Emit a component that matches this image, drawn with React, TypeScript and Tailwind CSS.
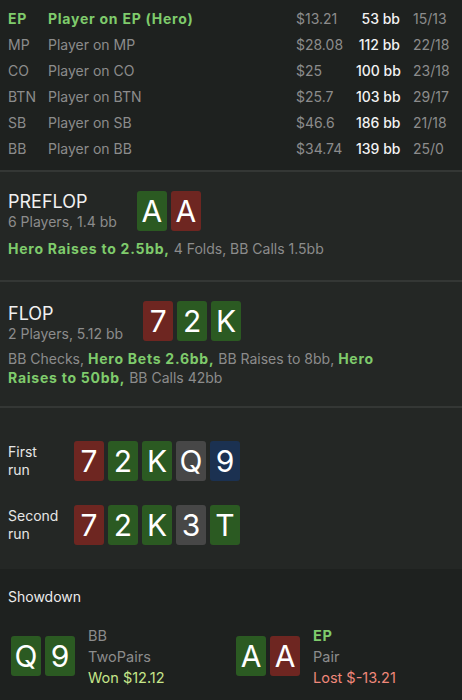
import React from "react";

type C = "g" | "r" | "k" | "b";
const cardBg: Record<C, string> = {
  g: "bg-[#2b5a22]",
  r: "bg-[#6e2621]",
  k: "bg-[#474747]",
  b: "bg-[#1b3151]",
};

function Card({ v, c }: { v: string; c: C }) {
  return (
    <div
      className={`w-[30px] h-[40px] rounded-[3px] flex items-center justify-center text-[30px] leading-none text-white ${cardBg[c]}`}
    >
      {v}
    </div>
  );
}

function Cards({ cards }: { cards: [string, C][] }) {
  return (
    <div className="flex gap-[4px]">
      {cards.map(([v, c], i) => (
        <Card key={i} v={v} c={c} />
      ))}
    </div>
  );
}

const players = [
  ["EP", "Player on EP (Hero)", "$13.21", "53 bb", "15/13", true],
  ["MP", "Player on MP", "$28.08", "112 bb", "22/18", false],
  ["CO", "Player on CO", "$25", "100 bb", "23/18", false],
  ["BTN", "Player on BTN", "$25.7", "103 bb", "29/17", false],
  ["SB", "Player on SB", "$46.6", "186 bb", "21/18", false],
  ["BB", "Player on BB", "$34.74", "139 bb", "25/0", false],
] as const;

const G = "text-[#7fcb6c] font-bold tracking-[0.75px]";

export default function App() {
  return (
    <div
      className="w-[462px] h-[700px] overflow-hidden bg-[#1e211f] text-[14px] text-[#8c8c8c]"
      style={{ fontFamily: "Inter, 'Liberation Sans', sans-serif" }}
    >
      {/* players */}
      <div className="px-2 pt-[5px] h-[172px] border-b-2 border-[#343735]">
        {players.map(([pos, name, money, bb, ratio, hero]) => (
          <div key={pos} className="flex items-center h-[26px]">
            <div className={`w-10 ${hero ? G : ""}`}>{pos}</div>
            <div className={`w-[248px] ${hero ? G : ""}`}>{name}</div>
            <div className="w-[60px]">{money}</div>
            <div className="w-[44px] text-right text-[#f2f2f2] font-medium whitespace-nowrap">{bb}</div>
            <div className="ml-[13px]">{ratio}</div>
          </div>
        ))}
      </div>

      {/* preflop */}
      <div className="bg-[#242725] h-[110px] px-2 pt-[19px] border-b-2 border-[#343735]">
        <div className="flex items-center gap-5">
          <div>
            <div className="text-[18px] leading-[22px] text-[#f0f0f0]">PREFLOP</div>
            <div className="leading-[18px]">6 Players, 1.4 bb</div>
          </div>
          <Cards cards={[["A", "g"], ["A", "r"]]} />
        </div>
        <div className="mt-[8px] leading-[19px]">
          <span className={G}>Hero Raises to 2.5bb,</span> 4 Folds, BB Calls 1.5bb
        </div>
      </div>

      {/* flop */}
      <div className="bg-[#242725] h-[126px] px-2 pt-[17px] border-b-2 border-[#343735]">
        <div className="flex items-center gap-5">
          <div className="pt-[4px]">
            <div className="text-[18px] leading-[22px] text-[#f0f0f0]">FLOP</div>
            <div className="leading-[18px]">2 Players, 5.12 bb</div>
          </div>
          <Cards cards={[["7", "r"], ["2", "g"], ["K", "g"]]} />
        </div>
        <div className="mt-[6px] leading-[19px] pr-[70px]">
          BB Checks, <span className={G}>Hero Bets 2.6bb,</span> BB Raises to 8bb,{" "}
          <span className={G}>Hero Raises to 50bb,</span> BB Calls 42bb
        </div>
      </div>

      {/* runs */}
      <div className="bg-[#242725] h-[161px] px-2 pt-[33px] flex flex-col gap-[24px]">
        {[
          ["First", [["7", "r"], ["2", "g"], ["K", "g"], ["Q", "k"], ["9", "b"]]],
          ["Second", [["7", "r"], ["2", "g"], ["K", "g"], ["3", "k"], ["T", "g"]]],
        ].map(([label, cards]) => (
          <div key={label as string} className="flex items-center">
            <div className="w-[66px] text-[#e6e6e6] leading-[18px]">
              {label as string}
              <br />
              run
            </div>
            <Cards cards={cards as [string, C][]} />
          </div>
        ))}
      </div>

      {/* showdown */}
      <div className="px-2 pt-[19px]">
        <div className="text-[#ececec] leading-[18px]">Showdown</div>
        <div className="flex mt-[17px] pl-[3px]">
          <div className="w-[225px] flex items-center gap-[13px]">
            <Cards cards={[["Q", "g"], ["9", "g"]]} />
            <div className="text-[14.5px] leading-[21px] pt-[2px]">
              <div>BB</div>
              <div>TwoPairs</div>
              <div className="text-[#c6e68a]">Won $12.12</div>
            </div>
          </div>
          <div className="flex items-center gap-[13px]">
            <Cards cards={[["A", "g"], ["A", "r"]]} />
            <div className="text-[14.5px] leading-[21px] pt-[2px]">
              <div className="text-[#7fcb6c] font-bold tracking-[0.75px]">EP</div>
              <div>Pair</div>
              <div className="text-[#f0887a]">Lost $-13.21</div>
            </div>
          </div>
        </div>
      </div>
    </div>
  );
}
